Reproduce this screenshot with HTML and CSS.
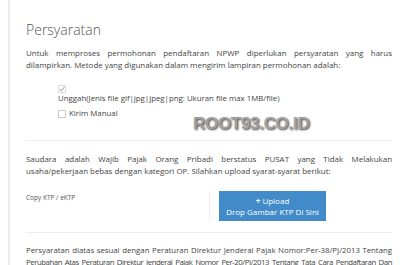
FILE: index.html
```html
<!DOCTYPE html>
<html lang="id">

<head>
    <meta charset="UTF-8">
    <meta name="viewport" content="width=device-width, initial-scale=1.0">
    <title>Persyaratan</title>
    <link rel="stylesheet" href="styles.css">
</head>

<body>
    <div id="page">
        <h2 class="title">Persyaratan</h2>
        <p class="text">Untuk memproses permohonan pendaftaran NPWP diperlukan persyaratan yang harus dilampirkan. Metode yang digunakan dalam mengirim lampiran permohonan adalah:</p>

        <ul class="options">
            <li class="opt-upload">
                <span class="check checked">
                    <svg width="7" height="6" viewBox="0 0 7 6"><path d="M0.8 3.2 L2.6 4.9 L6.2 0.9" fill="none" stroke="#666" stroke-width="0.9"/></svg>
                </span>
                <span class="opt-label">Unggah(Jenis file gif|jpg|jpeg|png: Ukuran file max 1MB/file)</span>
            </li>
            <li class="opt-manual">
                <span class="check"></span>
                <span class="opt-label">Kirim Manual</span>
            </li>
        </ul>

        <hr class="line">

        <p class="text">Saudara adalah Wajib Pajak Orang Pribadi berstatus PUSAT yang Tidak Melakukan usaha/pekerjaan bebas dengan kategori OP. Silahkan upload syarat-syarat berikut:</p>

        <div class="upload-row">
            <div class="upload-name">Copy KTP / eKTP</div>
            <div class="upload-zone">
                <div class="drop-btn">
                    <span><b class="plus">+</b> Upload</span>
                    <span>Drop Gambar KTP Di Sini</span>
                </div>
            </div>
        </div>

        <hr class="line line-after">

        <p class="text note">Persyaratan diatas sesuai dengan Peraturan Direktur Jenderal Pajak Nomor:Per-38/PJ/2013 Tentang <span class="tight">Perubahan Atas Peraturan Direktur Jenderal Pajak Nomor Per-20/PJ/2013 Tentang Tata Cara Pendaftaran Dan Pemberian Nomor Pokok Wajib Pajak.</span></p>
    </div>

    <div class="watermark">ROOT93.CO.ID</div>
</body>

</html>
```

FILE: styles.css
```css
* {
    margin: 0;
    padding: 0;
    box-sizing: border-box;
}

body {
    font-family: "Open Sans", "Liberation Sans", sans-serif;
    color: #444;
    background: #fff;
    overflow: hidden;
}

#page {
    margin-left: 8px;
    border-left: 2px solid #e4eef9;
    padding: 21px 8px 0 16px;
    min-height: 265px;
}

.title {
    font-weight: 300;
    font-size: 14px;
    color: #555;
    line-height: 18px;
    margin-bottom: 9px;
}

.text {
    font-size: 7.93px;
    line-height: 11.5px;
    text-align: justify;
}

.text.note {
    font-size: 7.8px;
}

.tight {
    letter-spacing: -0.45px;
}

ul {
    list-style: none;
}

.options {
    padding-left: 32px;
    margin-top: 14px;
    font-size: 7.85px;
}

.opt-upload {
    display: flex;
    flex-direction: column;
}

.opt-manual {
    display: flex;
    align-items: center;
    gap: 3px;
    margin-top: 4px;
}

.check {
    width: 8px;
    height: 8px;
    border: 1px solid #ccc;
    background: #fff;
    display: flex;
    align-items: center;
    justify-content: center;
}

.check.checked {
    border-color: #ddd;
}

.opt-label {
    line-height: 11px;
}

.line {
    border: 0;
    border-top: 1px solid #eee;
    margin: 21px 0 13px;
}

.upload-row {
    display: flex;
    margin-top: 14px;
}

.upload-name {
    width: 183px;
    font-size: 6.5px;
    color: #555;
    padding-top: 2px;
}

.upload-zone {
    border-left: 1px solid #eee;
    padding-left: 9px;
}

.drop-btn {
    width: 107px;
    height: 30px;
    background: #428bca;
    color: #fff;
    font-size: 8px;
    line-height: 11px;
    display: flex;
    flex-direction: column;
    align-items: center;
    justify-content: center;
}

.plus {
    font-weight: 700;
}

.line-after {
    margin: 11px 0 12px;
}

.watermark {
    position: absolute;
    left: 193px;
    top: 114px;
    font-family: "Liberation Sans", sans-serif;
    font-weight: 700;
    font-size: 17px;
    color: #a0a0a0;
    text-shadow: 1px 1px 2px #444;
    letter-spacing: -0.3px;
}
```
